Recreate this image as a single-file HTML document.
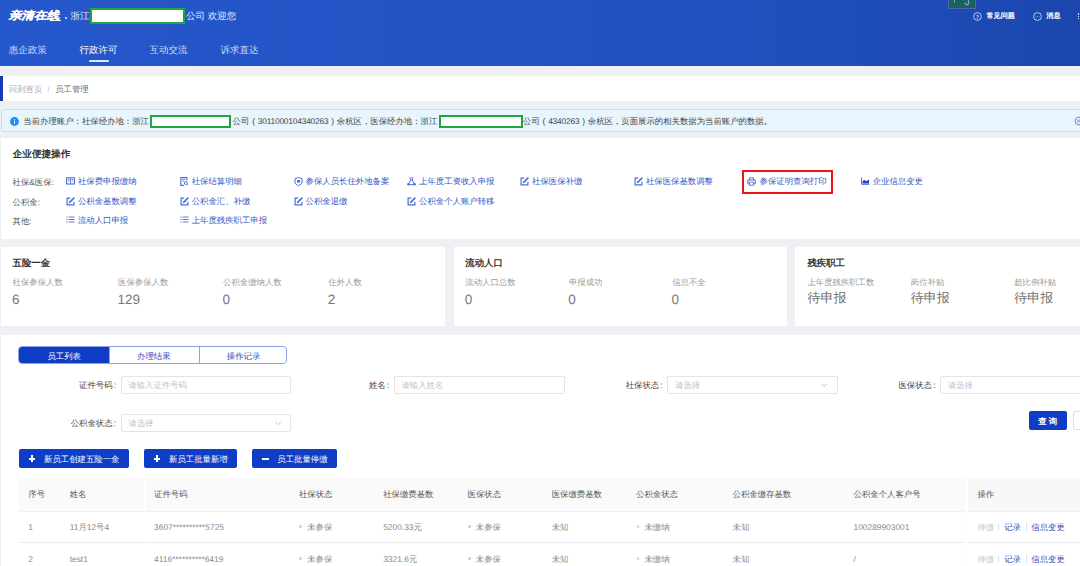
<!DOCTYPE html>
<html><head><meta charset="utf-8">
<style>
*{margin:0;padding:0;box-sizing:border-box}
html,body{width:1080px;height:566px;overflow:hidden}
body{position:relative;background:#eff0f4;font-family:"Liberation Sans",sans-serif;color:#333;text-rendering:geometricPrecision}
.a{position:absolute;white-space:nowrap}
.w{color:#fff}
.card{position:absolute;background:#fff;overflow:hidden}
.f8{font-size:8.4px;line-height:10px}
.lnk{color:#3655c2}
svg.ic{position:absolute;overflow:visible}
</style></head><body>

<div class="a" style="left:0;top:0;width:1080px;height:66.3px;background:linear-gradient(90deg,#2558cc 0%,#2354c6 35%,#2050bd 70%,#1b46ae 100%)">
<div class="a w" style="left:8.2px;top:8px;font-size:12.6px;line-height:14px;font-weight:bold;letter-spacing:0.1px;-webkit-text-stroke:0.2px #fff;transform:skewX(-14deg) scaleY(0.86);transform-origin:0 100%">亲清在线</div>
<div class="a" style="left:50px;top:20px;width:11px;height:1px;background:#fff"></div>
<div class="a" style="left:64.8px;top:16.5px;width:2px;height:2px;border-radius:1px;background:#e8eefc"></div>
<div class="a w" style="left:70.5px;top:10.8px;font-size:9.5px;line-height:11px;color:#e8eefc">浙江</div>
<div class="a" style="left:90px;top:8.1px;width:94.7px;height:16.3px;border:2px solid #1fa63f;background:#fff"></div>
<div class="a w" style="left:186px;top:10.8px;font-size:9.5px;line-height:11px;color:#e8eefc">公司 欢迎您</div>
<div class="a" style="left:948px;top:-1px;width:27.5px;height:9.8px;background:#17625f;border:1px solid #5465a6"></div>
<div class="a" style="left:953.8px;top:0;width:1.3px;height:3px;background:#8a9ee0;border-radius:1px"></div>
<svg class="ic" style="left:963px;top:0" width="7" height="6" viewBox="0 0 7 6"><path d="M5.5 0 V4 L3.8 5 L1.6 2.8" fill="none" stroke="#8a9ee0" stroke-width="1.2"/></svg>
<svg class="ic" style="left:972.5px;top:11.8px" width="9" height="9" viewBox="0 0 9 9"><circle cx="4.5" cy="4.5" r="3.9" fill="none" stroke="#dfe6fa" stroke-width="0.8"/><text x="4.5" y="6.6" font-size="5.5" text-anchor="middle" fill="#dfe6fa" font-family="Liberation Sans" font-weight="bold">?</text></svg>
<div class="a w" style="left:986.5px;top:11.6px;font-size:7.1px;line-height:9px;-webkit-text-stroke:0.25px #fff">常见问题</div>
<svg class="ic" style="left:1032.5px;top:11.8px" width="9" height="9" viewBox="0 0 9 9"><circle cx="4.5" cy="4.5" r="3.9" fill="none" stroke="#dfe6fa" stroke-width="0.8"/><path d="M2.6 4.6h0.6M4.2 4.6h0.6M5.8 4.6h0.6" stroke="#dfe6fa" stroke-width="0.7"/></svg>
<div class="a w" style="left:1046.3px;top:11.6px;font-size:7.1px;line-height:9px;-webkit-text-stroke:0.25px #fff">消息</div>
<div class="a" style="left:1078px;top:13px;width:2px;height:6px;border-left:1px dotted #dfe6fa"></div>
<div class="a" style="left:8.8px;top:45.4px;font-size:9.5px;line-height:11px;color:#cfdaf6">惠企政策</div>
<div class="a" style="left:79.4px;top:45.4px;font-size:9.5px;line-height:11px;color:#ffffff">行政许可</div>
<div class="a" style="left:149.6px;top:45.4px;font-size:9.5px;line-height:11px;color:#cfdaf6">互动交流</div>
<div class="a" style="left:220.5px;top:45.4px;font-size:9.5px;line-height:11px;color:#cfdaf6">诉求直达</div>
<div class="a" style="left:88.5px;top:59.8px;width:20.4px;height:1.8px;background:#dfe6fa;border-radius:1px"></div>
</div>
<div class="card" style="left:0;top:76.2px;width:1080px;height:24.8px">
<div class="a" style="left:0;top:0;width:2.6px;height:24.8px;background:#1a38b8"></div>
<div class="a f8" style="left:8.8px;top:8px;color:#b0aab0">回到首页</div>
<div class="a f8" style="left:47.5px;top:8px;color:#c0c0c0">/</div>
<div class="a f8" style="left:55.2px;top:8px;color:#707070">员工管理</div>
</div>
<div class="a" style="left:1px;top:108.9px;width:1090px;height:23.5px;background:#e8f5fd;border:1px solid #bfe0f8;border-radius:2px"></div>
<svg class="ic" style="left:10.3px;top:117px" width="9" height="9" viewBox="0 0 9 9"><circle cx="4.5" cy="4.5" r="4.4" fill="#1d8cf0"/><rect x="4" y="2.2" width="1" height="1" fill="#fff"/><rect x="4" y="3.8" width="1" height="3" fill="#fff"/></svg>
<div class="a f8" style="left:23.3px;top:116.3px;color:#444">当前办理账户：社保经办地：浙江</div>
<div class="a" style="left:149.6px;top:114.9px;width:81.9px;height:12.7px;border:2px solid #1fa63f;background:#fff"></div>
<div class="a f8" style="left:232.6px;top:116.3px;color:#444">公司<span style="display:inline-block;width:8.4px;text-align:center">(</span><span style="letter-spacing:-0.2px">3011000104340263</span><span style="display:inline-block;width:8.4px;text-align:center">)</span>余杭区，医保经办地：浙江</div>
<div class="a" style="left:438.7px;top:114.9px;width:84.2px;height:12.7px;border:2px solid #1fa63f;background:#fff"></div>
<div class="a f8" style="left:523px;top:116.3px;color:#444">公司<span style="display:inline-block;width:8.4px;text-align:center">(</span><span style="letter-spacing:-0.2px">4340263</span><span style="display:inline-block;width:8.4px;text-align:center">)</span>余杭区，页面展示的相关数据为当前账户的数据。</div>
<svg class="ic" style="left:1074.3px;top:116.1px" width="10" height="10" viewBox="0 0 10 10"><circle cx="5" cy="5" r="3.9" fill="none" stroke="#7b80cf" stroke-width="1"/><path d="M3 4.2h4M3 5.8h4" stroke="#7b80cf" stroke-width="0.8"/></svg>
<div class="card" style="left:1px;top:138.3px;width:1079px;height:100.4px">
<div class="a" style="left:11.7px;top:10.5px;font-size:9.6px;line-height:12px;font-weight:bold;color:#333">企业便捷操作</div>
<div class="a f8" style="left:11.5px;top:38.6px;color:#555">社保&amp;医保:</div>
<div class="a f8" style="left:11.5px;top:58.3px;color:#555">公积金:</div>
<div class="a f8" style="left:11.5px;top:77.3px;color:#555">其他:</div>
<svg class="ic" style="left:65.2px;top:38.8px" width="9" height="8" viewBox="0 0 9 8"><rect x="0.6" y="0.8" width="7.8" height="6.2" fill="none" stroke="#4b6fd4" stroke-width="1.1"/><path d="M4.5 0.8v6.2M2 2.5h1.5M2 4h1.5M5.5 2.5h1.5M5.5 4h1.5" stroke="#4b6fd4" stroke-width="0.8"/></svg>
<div class="a f8 lnk" style="left:76.90px;top:38.1px">社保费申报缴纳</div>
<svg class="ic" style="left:179px;top:38.8px" width="9" height="9" viewBox="0 0 9 9"><path d="M6.8 3.5V0.6H0.8v7.8h3" fill="none" stroke="#4b6fd4" stroke-width="1.1"/><path d="M2.2 2.4h3M2.2 4h2" stroke="#4b6fd4" stroke-width="0.8"/><circle cx="5.8" cy="6" r="1.5" fill="none" stroke="#4b6fd4" stroke-width="0.9"/><path d="M6.9 7.1l1.2 1.2" stroke="#4b6fd4" stroke-width="0.9"/></svg>
<div class="a f8 lnk" style="left:190.70px;top:38.1px">社保结算明细</div>
<svg class="ic" style="left:292.8px;top:38.8px" width="9" height="9" viewBox="0 0 9 9"><path d="M4.5 0.5L8 1.6V5C8 6.8 6.2 8 4.5 8.6 2.8 8 1 6.8 1 5V1.6Z" fill="none" stroke="#4b6fd4" stroke-width="1"/><rect x="3" y="3" width="3" height="2.6" fill="#4b6fd4"/></svg>
<div class="a f8 lnk" style="left:304.50px;top:38.1px">参保人员长住外地备案</div>
<svg class="ic" style="left:406.3px;top:38.8px" width="9" height="9" viewBox="0 0 9 9"><circle cx="4.5" cy="1.7" r="1.2" fill="none" stroke="#4b6fd4" stroke-width="1"/><circle cx="1.4" cy="7.3" r="1.2" fill="#4b6fd4"/><circle cx="7.6" cy="7.3" r="1.2" fill="#4b6fd4"/><path d="M3.9 2.8L1.6 6.8M5.1 2.8L7.4 6.8M1.4 7.6H7.6" fill="none" stroke="#4b6fd4" stroke-width="1"/></svg>
<div class="a f8 lnk" style="left:418.00px;top:38.1px">上年度工资收入申报</div>
<svg class="ic" style="left:519.4px;top:38.8px" width="9" height="9" viewBox="0 0 9 9"><path d="M4.2 1.1H1.1v6.8h6.8V4.8" fill="none" stroke="#4b6fd4" stroke-width="1.2"/><path d="M3.6 5.4L7.9 1.1" stroke="#4b6fd4" stroke-width="1.6" stroke-linecap="round"/></svg>
<div class="a f8 lnk" style="left:531.10px;top:38.1px">社保医保补缴</div>
<svg class="ic" style="left:633.2px;top:38.8px" width="9" height="9" viewBox="0 0 9 9"><path d="M4.2 1.1H1.1v6.8h6.8V4.8" fill="none" stroke="#4b6fd4" stroke-width="1.2"/><path d="M3.6 5.4L7.9 1.1" stroke="#4b6fd4" stroke-width="1.6" stroke-linecap="round"/></svg>
<div class="a f8 lnk" style="left:644.90px;top:38.1px">社保医保基数调整</div>
<svg class="ic" style="left:746.3px;top:38.8px" width="9" height="9" viewBox="0 0 9 9"><path d="M2.5 3V0.8h4V3" fill="none" stroke="#4b6fd4" stroke-width="0.9"/><path d="M2.3 6.8H0.8V3h7.4v3.8H6.7" fill="none" stroke="#4b6fd4" stroke-width="1"/><rect x="2.6" y="5.2" width="3.8" height="3" fill="none" stroke="#4b6fd4" stroke-width="0.9"/></svg>
<div class="a f8 lnk" style="left:758.60px;top:38.1px">参保证明查询打印</div>
<svg class="ic" style="left:860px;top:38.8px" width="9" height="8" viewBox="0 0 9 8"><path d="M0.6 0.5V7.3H8.5" fill="none" stroke="#4b6fd4" stroke-width="1"/><path d="M1.6 6.5V4L3.5 2.8 5 4.3 8 2.6V6.5Z" fill="#2546c8"/></svg>
<div class="a f8 lnk" style="left:871.70px;top:38.1px">企业信息变更</div>
<svg class="ic" style="left:65.2px;top:58.5px" width="9" height="9" viewBox="0 0 9 9"><path d="M4.2 1.1H1.1v6.8h6.8V4.8" fill="none" stroke="#4b6fd4" stroke-width="1.2"/><path d="M3.6 5.4L7.9 1.1" stroke="#4b6fd4" stroke-width="1.6" stroke-linecap="round"/></svg>
<div class="a f8 lnk" style="left:76.90px;top:57.8px">公积金基数调整</div>
<svg class="ic" style="left:179px;top:58.5px" width="9" height="9" viewBox="0 0 9 9"><path d="M4.2 1.1H1.1v6.8h6.8V4.8" fill="none" stroke="#4b6fd4" stroke-width="1.2"/><path d="M3.6 5.4L7.9 1.1" stroke="#4b6fd4" stroke-width="1.6" stroke-linecap="round"/></svg>
<div class="a f8 lnk" style="left:190.70px;top:57.8px">公积金汇、补缴</div>
<svg class="ic" style="left:292.8px;top:58.5px" width="9" height="9" viewBox="0 0 9 9"><path d="M4.2 1.1H1.1v6.8h6.8V4.8" fill="none" stroke="#4b6fd4" stroke-width="1.2"/><path d="M3.6 5.4L7.9 1.1" stroke="#4b6fd4" stroke-width="1.6" stroke-linecap="round"/></svg>
<div class="a f8 lnk" style="left:304.50px;top:57.8px">公积金退缴</div>
<svg class="ic" style="left:406.3px;top:58.5px" width="9" height="9" viewBox="0 0 9 9"><path d="M4.2 1.1H1.1v6.8h6.8V4.8" fill="none" stroke="#4b6fd4" stroke-width="1.2"/><path d="M3.6 5.4L7.9 1.1" stroke="#4b6fd4" stroke-width="1.6" stroke-linecap="round"/></svg>
<div class="a f8 lnk" style="left:418.00px;top:57.8px">公积金个人账户转移</div>
<svg class="ic" style="left:65.2px;top:77.5px" width="9" height="8" viewBox="0 0 9 8"><path d="M0.3 1h1.2M0.3 3.5h1.2M0.3 6h1.2M2.6 1h6M2.6 3.5h6M2.6 6h6" stroke="#4b6fd4" stroke-width="0.9"/></svg>
<div class="a f8 lnk" style="left:76.90px;top:76.8px">流动人口申报</div>
<svg class="ic" style="left:179px;top:77.5px" width="9" height="8" viewBox="0 0 9 8"><path d="M0.3 1h1.2M0.3 3.5h1.2M0.3 6h1.2M2.6 1h6M2.6 3.5h6M2.6 6h6" stroke="#4b6fd4" stroke-width="0.9"/></svg>
<div class="a f8 lnk" style="left:190.70px;top:76.8px">上年度残疾职工申报</div>
<div class="a" style="left:740.5px;top:31.7px;width:91.3px;height:24.2px;border:2.6px solid #e8141e"></div>
</div>
<div class="card" style="left:1px;top:247px;width:444.4px;height:79.3px">
<div class="a" style="left:11.6px;top:10px;font-size:9.4px;line-height:11px;font-weight:bold;color:#333">五险一金</div>
<div class="a f8" style="left:11.60px;top:29.8px;color:#9a9a9a">社保参保人数</div>
<div class="a" style="left:11.00px;top:45.3px;font-size:13.5px;line-height:16px;color:#777">6</div>
<div class="a f8" style="left:117.00px;top:29.8px;color:#9a9a9a">医保参保人数</div>
<div class="a" style="left:116.40px;top:45.3px;font-size:13.5px;line-height:16px;color:#777">129</div>
<div class="a f8" style="left:222.10px;top:29.8px;color:#9a9a9a">公积金缴纳人数</div>
<div class="a" style="left:221.50px;top:45.3px;font-size:13.5px;line-height:16px;color:#777">0</div>
<div class="a f8" style="left:327.30px;top:29.8px;color:#9a9a9a">住外人数</div>
<div class="a" style="left:326.70px;top:45.3px;font-size:13.5px;line-height:16px;color:#777">2</div>
</div>
<div class="card" style="left:453.5px;top:247px;width:333.8px;height:79.3px">
<div class="a" style="left:11.800000000000011px;top:10px;font-size:9.4px;line-height:11px;font-weight:bold;color:#333">流动人口</div>
<div class="a f8" style="left:11.80px;top:29.8px;color:#9a9a9a">流动人口总数</div>
<div class="a" style="left:11.20px;top:45.3px;font-size:13.5px;line-height:16px;color:#777">0</div>
<div class="a f8" style="left:115.40px;top:29.8px;color:#9a9a9a">申报成功</div>
<div class="a" style="left:114.80px;top:45.3px;font-size:13.5px;line-height:16px;color:#777">0</div>
<div class="a f8" style="left:218.70px;top:29.8px;color:#9a9a9a">信息不全</div>
<div class="a" style="left:218.10px;top:45.3px;font-size:13.5px;line-height:16px;color:#777">0</div>
</div>
<div class="card" style="left:795.4px;top:247px;width:290px;height:79.3px">
<div class="a" style="left:12.100000000000023px;top:10px;font-size:9.4px;line-height:11px;font-weight:bold;color:#333">残疾职工</div>
<div class="a f8" style="left:12.10px;top:29.8px;color:#9a9a9a">上年度残疾职工数</div>
<div class="a" style="left:12.10px;top:43.1px;font-size:13px;line-height:15px;color:#707070">待申报</div>
<div class="a f8" style="left:115.40px;top:29.8px;color:#9a9a9a">岗位补贴</div>
<div class="a" style="left:115.40px;top:43.1px;font-size:13px;line-height:15px;color:#707070">待申报</div>
<div class="a f8" style="left:218.80px;top:29.8px;color:#9a9a9a">超比例补贴</div>
<div class="a" style="left:218.80px;top:43.1px;font-size:13px;line-height:15px;color:#707070">待申报</div>
</div>
<div class="card" style="left:1px;top:334.6px;width:1079px;height:240px">
<div class="a" style="left:17.3px;top:11.9px;width:268.6px;height:17.1px;border:1px solid #8ea2e4;border-radius:4px;overflow:hidden">
<div class="a" style="left:0;top:0;width:89.7px;height:100%;background:#0f3cc5"></div>
<div class="a" style="left:89.7px;top:0;width:1px;height:100%;background:#8ea2e4"></div>
<div class="a" style="left:179.4px;top:0;width:1px;height:100%;background:#8ea2e4"></div>
<div class="a f8" style="left:0.0px;top:3.2px;width:89.7px;text-align:center;color:#fff">员工列表</div>
<div class="a f8" style="left:89.7px;top:3.2px;width:89.7px;text-align:center;color:#2a48b8">办理结果</div>
<div class="a f8" style="left:179.4px;top:3.2px;width:89.7px;text-align:center;color:#2a48b8">操作记录</div>
</div>
<div class="a f8" style="left:-0.2px;width:115.3px;text-align:right;top:45.6px;color:#444">证件号码<span style="margin-left:1.2px">:</span></div>
<div class="a" style="left:119.8px;top:41.2px;width:170.7px;height:18.4px;border:1px solid #e4e4e6;border-radius:2px"></div>
<div class="a f8" style="left:127.3px;top:45.6px;color:#c0c4cc">请输入证件号码</div>
<div class="a f8" style="left:272.9px;width:115.3px;text-align:right;top:45.6px;color:#444">姓名<span style="margin-left:1.2px">:</span></div>
<div class="a" style="left:392.9px;top:41.2px;width:170.7px;height:18.4px;border:1px solid #e4e4e6;border-radius:2px"></div>
<div class="a f8" style="left:400.4px;top:45.6px;color:#c0c4cc">请输入姓名</div>
<div class="a f8" style="left:546.4px;width:115.3px;text-align:right;top:45.6px;color:#444">社保状态<span style="margin-left:1.2px">:</span></div>
<div class="a" style="left:666.4px;top:41.2px;width:170.7px;height:18.4px;border:1px solid #e4e4e6;border-radius:2px"></div>
<div class="a f8" style="left:673.9px;top:45.6px;color:#c0c4cc">请选择</div>
<svg class="ic" style="left:820.1px;top:48.1px" width="7" height="5" viewBox="0 0 7 5"><path d="M0.5 0.6L3.2 3.8 5.9 0.6" fill="none" stroke="#c4c4c4" stroke-width="0.9"/></svg>
<div class="a f8" style="left:819.2px;width:115.3px;text-align:right;top:45.6px;color:#444">医保状态<span style="margin-left:1.2px">:</span></div>
<div class="a" style="left:939.2px;top:41.2px;width:170.7px;height:18.4px;border:1px solid #e4e4e6;border-radius:2px"></div>
<div class="a f8" style="left:946.7px;top:45.6px;color:#c0c4cc">请选择</div>
<svg class="ic" style="left:1092.9px;top:48.1px" width="7" height="5" viewBox="0 0 7 5"><path d="M0.5 0.6L3.2 3.8 5.9 0.6" fill="none" stroke="#c4c4c4" stroke-width="0.9"/></svg>
<div class="a f8" style="left:-0.2px;width:115.3px;text-align:right;top:83.8px;color:#444">公积金状态<span style="margin-left:1.2px">:</span></div>
<div class="a" style="left:119.8px;top:79.4px;width:170.7px;height:18.4px;border:1px solid #e4e4e6;border-radius:2px"></div>
<div class="a f8" style="left:127.3px;top:83.8px;color:#c0c4cc">请选择</div>
<svg class="ic" style="left:273.5px;top:86.3px" width="7" height="5" viewBox="0 0 7 5"><path d="M0.5 0.6L3.2 3.8 5.9 0.6" fill="none" stroke="#c4c4c4" stroke-width="0.9"/></svg>
<div class="a" style="left:1027.7px;top:76.7px;width:38px;height:18.9px;background:#0f3ec6;border-radius:2px"></div>
<div class="a f8" style="left:1027.7px;width:38px;text-align:center;top:81.0px;color:#fff;font-weight:bold;letter-spacing:2px;text-indent:2px">查询</div>
<div class="a" style="left:1072.1px;top:76.7px;width:30px;height:18.9px;background:#fff;border:1px solid #dcdfe6;border-radius:2px"></div>
<div class="a" style="left:17.5px;top:114.9px;width:110.7px;height:18.8px;background:#0f3ec6;border-radius:2px"></div>
<div class="a" style="left:27.7px;top:123.7px;width:6.6px;height:1.4px;background:#fff"></div>
<div class="a" style="left:30.3px;top:120.4px;width:1.4px;height:6.6px;background:#fff"></div>
<div class="a f8" style="left:43.0px;top:119.0px;color:#fff">新员工创建五险一金</div>
<div class="a" style="left:142.6px;top:114.9px;width:93.3px;height:18.8px;background:#0f3ec6;border-radius:2px"></div>
<div class="a" style="left:152.8px;top:123.7px;width:6.6px;height:1.4px;background:#fff"></div>
<div class="a" style="left:155.4px;top:120.4px;width:1.4px;height:6.6px;background:#fff"></div>
<div class="a f8" style="left:168.1px;top:119.0px;color:#fff">新员工批量新增</div>
<div class="a" style="left:250.8px;top:114.9px;width:85.4px;height:18.8px;background:#0f3ec6;border-radius:2px"></div>
<div class="a" style="left:261.0px;top:123.7px;width:6.6px;height:1.4px;background:#fff"></div>
<div class="a f8" style="left:276.3px;top:119.0px;color:#fff">员工批量停缴</div>
<div class="a" style="left:17.5px;top:143.6px;width:1070px;height:32.4px;background:#fafafa"></div>
<div class="a" style="left:17.5px;top:207.7px;width:1070px;height:1px;background:#ececec"></div>
<div class="a" style="left:17.5px;top:176.0px;width:1070px;height:1px;background:#f0f0f0"></div>
<div class="a" style="left:962.5px;top:143.6px;width:3px;height:100px;background:linear-gradient(90deg,rgba(0,0,0,0),rgba(0,0,0,0.04))"></div>
<div class="a" style="left:965px;top:143.6px;width:120px;height:32.4px;background:#f8f8f8"></div>
<div class="a" style="left:963.8px;top:143.6px;width:2.8px;height:100px;background:#fff"></div>
<div class="a" style="left:142.9px;top:143.6px;width:1px;height:100px;background:#fff"></div>
<div class="a f8" style="left:27.3px;top:154.4px;color:#555">序号</div>
<div class="a f8" style="left:68.7px;top:154.4px;color:#555">姓名</div>
<div class="a f8" style="left:153.1px;top:154.4px;color:#555">证件号码</div>
<div class="a f8" style="left:297.9px;top:154.4px;color:#555">社保状态</div>
<div class="a f8" style="left:382.2px;top:154.4px;color:#555">社保缴费基数</div>
<div class="a f8" style="left:466.5px;top:154.4px;color:#555">医保状态</div>
<div class="a f8" style="left:550.7px;top:154.4px;color:#555">医保缴费基数</div>
<div class="a f8" style="left:635.1px;top:154.4px;color:#555">公积金状态</div>
<div class="a f8" style="left:731.5px;top:154.4px;color:#555">公积金缴存基数</div>
<div class="a f8" style="left:852.5px;top:154.4px;color:#555">公积金个人客户号</div>
<div class="a f8" style="left:976.4px;top:154.4px;color:#555">操作</div>
<div class="a f8" style="left:27.3px;top:187.0px;color:#888">1</div>
<div class="a f8" style="left:68.7px;top:187.0px;color:#888">11月12号4</div>
<div class="a f8" style="left:153.1px;top:187.0px;color:#888">3607**********5725</div>
<div class="a" style="left:298.3px;top:190.9px;width:2.7px;height:2.7px;border-radius:50%;background:#cfcfcf"></div>
<div class="a f8" style="left:306.2px;top:187.0px;color:#888">未参保</div>
<div class="a f8" style="left:382.2px;top:187.0px;color:#888">5200.33元</div>
<div class="a" style="left:466.9px;top:190.9px;width:2.7px;height:2.7px;border-radius:50%;background:#cfcfcf"></div>
<div class="a f8" style="left:474.8px;top:187.0px;color:#888">未参保</div>
<div class="a f8" style="left:550.7px;top:187.0px;color:#888">未知</div>
<div class="a" style="left:635.5px;top:190.9px;width:2.7px;height:2.7px;border-radius:50%;background:#cfcfcf"></div>
<div class="a f8" style="left:643.4px;top:187.0px;color:#888">未缴纳</div>
<div class="a f8" style="left:731.5px;top:187.0px;color:#888">未知</div>
<div class="a f8" style="left:852.5px;top:187.0px;color:#888">100289903001</div>
<div class="a f8" style="left:976.4px;top:187.0px;color:#c8c8c8">停缴</div>
<div class="a" style="left:997.3px;top:188.5px;width:0.8px;height:7.5px;background:#dcdfe6"></div>
<div class="a f8" style="left:1003.2px;top:187.0px;color:#2a48c0">记录</div>
<div class="a" style="left:1024.5px;top:188.5px;width:0.8px;height:7.5px;background:#dcdfe6"></div>
<div class="a f8" style="left:1030.3px;top:187.0px;color:#2a48c0">信息变更</div>
<div class="a f8" style="left:27.3px;top:219.0px;color:#888">2</div>
<div class="a f8" style="left:68.7px;top:219.0px;color:#888">test1</div>
<div class="a f8" style="left:153.1px;top:219.0px;color:#888">4116**********6419</div>
<div class="a" style="left:298.3px;top:222.9px;width:2.7px;height:2.7px;border-radius:50%;background:#cfcfcf"></div>
<div class="a f8" style="left:306.2px;top:219.0px;color:#888">未参保</div>
<div class="a f8" style="left:382.2px;top:219.0px;color:#888">3321.6元</div>
<div class="a" style="left:466.9px;top:222.9px;width:2.7px;height:2.7px;border-radius:50%;background:#cfcfcf"></div>
<div class="a f8" style="left:474.8px;top:219.0px;color:#888">未参保</div>
<div class="a f8" style="left:550.7px;top:219.0px;color:#888">未知</div>
<div class="a" style="left:635.5px;top:222.9px;width:2.7px;height:2.7px;border-radius:50%;background:#cfcfcf"></div>
<div class="a f8" style="left:643.4px;top:219.0px;color:#888">未缴纳</div>
<div class="a f8" style="left:731.5px;top:219.0px;color:#888">未知</div>
<div class="a f8" style="left:852.5px;top:219.0px;color:#888">/</div>
<div class="a f8" style="left:976.4px;top:219.0px;color:#c8c8c8">停缴</div>
<div class="a" style="left:997.3px;top:220.5px;width:0.8px;height:7.5px;background:#dcdfe6"></div>
<div class="a f8" style="left:1003.2px;top:219.0px;color:#2a48c0">记录</div>
<div class="a" style="left:1024.5px;top:220.5px;width:0.8px;height:7.5px;background:#dcdfe6"></div>
<div class="a f8" style="left:1030.3px;top:219.0px;color:#2a48c0">信息变更</div>
</div>
</body></html>
